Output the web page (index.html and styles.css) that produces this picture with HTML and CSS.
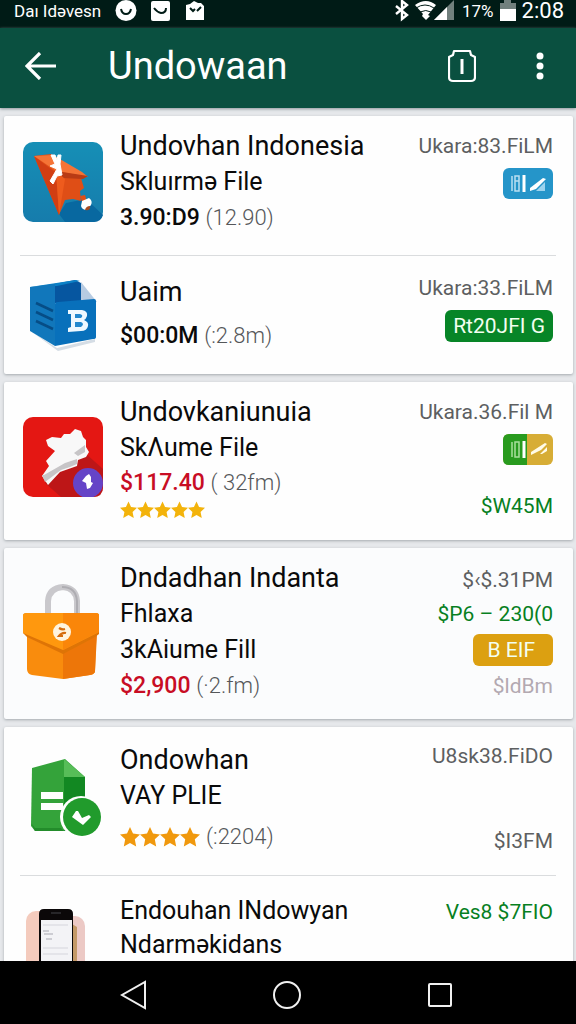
FILE: index.html
```html
<!DOCTYPE html>
<html lang="id">
<head>
<meta charset="utf-8">
<meta name="viewport" content="width=device-width, initial-scale=1">
<title>Undowaan</title>
<link rel="stylesheet" href="styles.css">
</head>
<body>
<svg class="defs" width="0" height="0" aria-hidden="true">
  <symbol id="star" viewBox="0 0 20 20"><path d="M10 0l3 6.600 7 .8-5.200 4.900L16.200 19.500 10 16l-6.200 3.500 1.400-7.200L0 7.400l7-.8z"/></symbol>
</svg>

<div class="status">
  <span class="carrier">Daı Idəvesn</span>
  <svg class="notices" width="89" height="22" viewBox="0 0 89 22">
    <g fill="#fff"><circle cx="11" cy="10.500" r="10.500"/><rect x="36" y="1" width="19" height="20" rx="2"/><path d="M71 5l4-1 4-3 4 2 3 0 3 3v14H71z"/></g>
    <g fill="none" stroke="#001b16" stroke-width="2"><path d="M6 9q1 5 5 5t5-5"/><path d="M39 8q3 4 7 5 5 0 5-5"/><path d="M75 8l3 3 2-2M82 11l4-4"/></g>
  </svg>
  <div class="system">
    <svg width="62" height="22" viewBox="0 0 62 22">
      <path d="M2 6l11 9-5 4V1l5 4L2 14" fill="none" stroke="#fff" stroke-width="2.400"/>
      <path d="M21 5q11-8 21 0l-8 10 2 1-4 4-4-4 1-2z" fill="#fff"/>
      <path d="M22 8q9-6 18 0M26 12q6-3 11 0" fill="none" stroke="#001b16" stroke-width="1"/>
      <path d="M40 20L60 0v20z" fill="#71807d"/><path d="M40 20L53 7v13z" fill="#fff"/>
    </svg>
    <span class="percent">17%</span>
    <svg width="16" height="22" viewBox="0 0 16 22"><path d="M0 3h4V0h7v3h5v6H0z" fill="#71807d"/><path d="M0 9h16v12H0z" fill="#fff"/></svg>
    <span class="clock">2:08</span>
  </div>
</div>

<header class="bar">
  <button class="bar-button" aria-label="Back">
    <svg width="32" height="28" viewBox="0 0 32 28" fill="none" stroke="#fff" stroke-width="3.200"><path d="M31 14H3M15 1L2 14l13 13"/></svg>
  </button>
  <h1>Undowaan</h1>
  <button class="bar-button" aria-label="Clipboard">
    <svg width="28" height="34" viewBox="0 0 28 34" fill="none" stroke="#fff" stroke-width="2.200"><path d="M6 2h16l1 4 4 2v20q0 4-4 4H5q-4 0-4-4V8l4-2z" stroke-linejoin="round"/><path d="M14 10v15" stroke-width="3"/></svg>
  </button>
  <button class="bar-button" aria-label="More options">
    <svg width="8" height="28" viewBox="0 0 8 28" fill="#fff"><circle cx="4" cy="4" r="3.500"/><circle cx="4" cy="14" r="3.500"/><circle cx="4" cy="24" r="3.500"/></svg>
  </button>
</header>

<main class="list">
  <section class="card">
    <article class="row">
      <svg class="icon" viewBox="0 0 80 80">
        <defs><linearGradient id="sky" x2="0" y2="1"><stop stop-color="#168fb6"/><stop offset="1" stop-color="#167cac"/></linearGradient></defs>
        <rect width="80" height="80" rx="10" fill="url(#sky)"/>
        <path d="M36 72l7-11 20-4 17 16q-2 7-9 7H42z" fill="#0868a0"/>
        <path d="M11 14l25 59 6-15 8-1 8 2-1-10 4-3-4-13L28 12z" fill="#df4e16"/>
        <path d="M11 14l22 17 3 42z" fill="#d13e13"/><path d="M11 14l22 15 32 6-6-5-29-17z" fill="#f57436"/><path d="M33 29l32 5-5 3-20-1z" fill="#b93b15"/><path d="M33 29l9 8-6 36z" fill="#ee5b1d"/>
        <path d="M27 39l7-12-7-3 5-2-4-9h4l2 5 1-5h3l-1 9 2 11-5 1-4 8z" fill="#fff" stroke="#fff" stroke-width="1"/>
        <path d="M57 54l5-1 2 7-4 2z" fill="#df4e16"/><path d="M59 59l7-3q4 3 2 7l-4 5q-5 0-6-4z" fill="#fff"/><path d="M62 68q1-4 5-4 1 5-5 4z" fill="#a74b21"/>
      </svg>
      <div class="info">
        <h2>Undovhan Indonesia<span class="subtitle">Skluırmə File</span></h2>
        <p class="price">3.90:D9 <span class="count">(12.90)</span></p>
      </div>
      <div class="side">
        <p>Ukara:83.FiLM</p>
        <svg class="chip" viewBox="0 0 50 31"><rect width="50" height="31" rx="6" fill="#2595c9"/><path d="M9 8v15M12 8h4v15h-4zM12 13h4" fill="none" stroke="#b9e0f2" stroke-width="1.500"/><path d="M21 7v17" stroke="#fff" stroke-width="3"/><path d="M27 20l13-10 3 1-10 10-6 2z" fill="#fff"/><path d="M33 23l9-9v9z" fill="#9bd3ee"/></svg>
      </div>
    </article>
    <article class="row row-loose">
      <svg class="icon" viewBox="0 0 80 80">
        <path d="M9 58l25 16 38-9v3l-37 9z" fill="#d5dde5"/>
        <path d="M58 8l16 20-18 2z" fill="#b7cbe2"/>
        <path d="M31 10l21-4 6 3v20H31z" fill="#0656a0"/>
        <path d="M7 13l46-7 4 1-23 5z" fill="#0b80c6"/>
        <path d="M7 13l25-3v62L7 57z" fill="#1177bb"/>
        <path d="M32 30q0-2 3-2l36-3q2 0 2 2v36q0 2-3 2l-38 7z" fill="#0870bb"/>
        <path d="M13 29l17 8M13 38l17 8M13 47l17 8" stroke="#064d86" stroke-width="2.500"/>
        <path d="M45 36h14q6 1 5 6-1 3-3 4 5 2 4 6-1 5-7 5l-13 1v-4l3-1V40h-3v-4z" fill="#eef8ff"/><path d="M52 40h5q4 1 1 4h-6zM52 48h6q4 2 0 5h-6z" fill="#2388ce"/>
      </svg>
      <div class="info">
        <h2>Uaim</h2>
        <p class="price">$00:0M <span class="count">(:2.8m)</span></p>
      </div>
      <div class="side">
        <p>Ukara:33.FiLM</p>
        <span class="badge badge-green">Rt20JFI G</span>
      </div>
    </article>
  </section>

  <section class="card">
    <article class="row row-rated">
      <svg class="icon" viewBox="0 0 80 80">
        <rect width="80" height="80" rx="10" fill="#e41713"/>
        <path d="M62 36l18 16v18q0 10-10 10H38L22 66z" fill="#bd1617"/>
        <path d="M19 59l7-10-3-5 9-10-7-5-2-6 6-3 9 1 3-4 6 0 5-5 6 2 2 6 3 3v7l3 5-3 5-8 3-1 6-17 6-12 13z" fill="#f8f8f8"/>
        <path d="M62 28v7l-7 4-4-3zM54 42v5l-7 3-9 3-16 12-3-7 2 0 21-12z" fill="#c7c5c7"/>
        <circle cx="65" cy="66" r="15" fill="#6544c7"/><path d="M63 59l3-2 2 3v5l2 1-3 5-3 1-1-6-4-2z" fill="#fff"/>
      </svg>
      <div class="info">
        <h2>Undovkaniunuia<span class="subtitle">SkΛume File</span></h2>
        <p class="price price-red">$117.40 <span class="count">( 32fm)</span></p>
        <div class="stars stars-small" role="img" aria-label="5 stars"><svg><use href="#star"/></svg><svg><use href="#star"/></svg><svg><use href="#star"/></svg><svg><use href="#star"/></svg><svg><use href="#star"/></svg></div>
      </div>
      <div class="side">
        <p>Ukara.36.Fil M</p>
        <svg class="chip" viewBox="0 0 50 31"><rect width="50" height="31" rx="6" fill="#d7ad36"/><path d="M24 0H6Q0 0 0 6v19q0 6 6 6h18z" fill="#299b1f"/><path d="M9 8v15M12 8h4v15h-4z" fill="none" stroke="#a9df9d" stroke-width="1.500"/><path d="M21 7v17" stroke="#fff" stroke-width="3"/><path d="M28 18l14-9 2 1-6 6-10 5zM37 20l7-7v4l-5 3z" fill="#fffbe9"/></svg>
        <p class="green last">$W45M</p>
      </div>
    </article>
  </section>

  <section class="card card-tint">
    <article class="row row-tall">
      <svg class="icon icon-tall" viewBox="0 0 80 96">
        <path d="M26 30V17q1-13 15-14 13 1 14 14v13" transform="translate(-1 0)" fill="none" stroke="#c9c8cc" stroke-width="6"/><path d="M39 3q14 0 15 14v13" fill="none" stroke="#aeadb2" stroke-width="2"/>
        <path d="M4 36h70l-2 51q0 3-5 4l-27 4-31-4q-5-1-5-6z" fill="#f98c0d"/><path d="M40 60l34-10-2 37q0 3-5 4l-27 4z" fill="#ed7609"/>
        <path d="M0 32q0-3 4-3h68q4 0 4 3v18l-4 3-32 17L4 53l-4-4z" fill="#de7406"/><path d="M0 31q0-2 4-2h68q4 0 4 2v17L40 66 0 49z" fill="#ff980e"/><path d="M40 29h32q4 0 4 2v17L40 66z" fill="#fa8609"/>
        <circle cx="39" cy="48" r="9" fill="#fff4df"/><path d="M36 44q3 2 6 1M43 49q-4-1-7 3l4 0" fill="none" stroke="#d56c0e" stroke-width="2.200"/>
      </svg>
      <div class="info">
        <h2>Dndadhan Indanta<span class="subtitle">Fhlaxa</span><span class="subtitle">3kAiume Fill</span></h2>
        <p class="price price-red">$2,900 <span class="count">(·2.fm)</span></p>
      </div>
      <div class="side">
        <p>$‹$.31PM</p>
        <p class="green">$P6 – 230(0</p>
        <span class="badge badge-gold">B EIF</span>
        <p class="faint">$ldBm</p>
      </div>
    </article>
  </section>

  <section class="card">
    <article class="row row-file">
      <svg class="icon" viewBox="0 0 80 80">
        <path d="M9 9L42 0l20 18v54H12l-4-5z" fill="#34a33a"/><path d="M41 0l21 18H41z" fill="#57bd58"/><path d="M41 18h21v54H41z" fill="#128822"/><path d="M8 64l4 8h29l-3-3H12z" fill="#238c2b"/>
        <path d="M18 33h22v7H18zM18 44h22v7H18z" fill="#fff"/><circle cx="58" cy="58" r="21" fill="#fff"/><circle cx="59" cy="58" r="19" fill="#219b2c"/>
        <path d="M49 58l4-6 2 0 4 7 7-3 2 2-8 8z" fill="#fff"/>
      </svg>
      <div class="info">
        <h2>Ondowhan<span class="subtitle">VAY PLIE</span></h2>
        <div class="rating"><div class="stars" role="img" aria-label="4 stars"><svg><use href="#star"/></svg><svg><use href="#star"/></svg><svg><use href="#star"/></svg><svg><use href="#star"/></svg></div><span class="count">(:2204)</span></div>
      </div>
      <div class="side">
        <p>U8sk38.FiDO</p>
        <p class="last">$I3FM</p>
      </div>
    </article>
    <article class="row row-end">
      <svg class="icon" viewBox="0 0 80 80">
        <rect x="3" y="17" width="28" height="63" rx="10" fill="#f4cbbd"/><rect x="36" y="22" width="26" height="58" rx="10" fill="#ecc9c5"/><path d="M49 30l5 3v47h-5z" fill="#c49a68"/>
        <path d="M16 80V20q0-5 5-5h24q5 0 5 5v60z" fill="#0b0809"/><path d="M18 26h31v54H18z" fill="#f3f3f6"/>
        <path d="M20 31h25M20 54h25M20 60h25" stroke="#d5d5dc"/><path d="M20 37h6M21 40h9M23 45h6" stroke="#a7a7b0"/><path d="M28 19h10" stroke="#44454a"/>
      </svg>
      <div class="info">
        <h2>Endouhan INdowyan<span class="subtitle">Ndarməkidans</span></h2>
      </div>
      <div class="side">
        <p class="green">Ves8 $7FIO</p>
      </div>
    </article>
  </section>
</main>

<nav class="system-nav">
  <button aria-label="Back"><svg width="28" height="30" viewBox="0 0 28 30"><path d="M25 2v26L2 15z"/></svg></button>
  <button aria-label="Home"><svg width="30" height="30" viewBox="0 0 30 30"><circle cx="15" cy="15" r="13"/></svg></button>
  <button aria-label="Recent apps"><svg width="26" height="26" viewBox="0 0 26 26"><rect x="2" y="2" width="22" height="22" rx="1"/></svg></button>
</nav>
</body>
</html>
```
FILE: styles.css
```css
* {
  box-sizing: border-box;
}

body {
  display: flex;
  flex-direction: column;
  height: 100vh;
  margin: 0;
  overflow: hidden;
  background: #e6e8eb;
  color: #0a0a0a;
  font-family: Roboto, "Noto Sans", sans-serif;
}

h1, h2, p {
  margin: 0;
  font-weight: 400;
  white-space: nowrap;
}

svg {
  display: block;
  flex: none;
}

button {
  display: flex;
  align-items: center;
  justify-content: center;
  padding: 0;
  border: 0;
  background: none;
}

.defs {
  position: absolute;
}

/* Status bar */
.status {
  display: flex;
  flex: none;
  align-items: flex-start;
  height: 28px;
  padding: 0 12px 0 14px;
  background: #001b16;
  color: #fff;
  font-size: 17px;
  line-height: 22px;
}

.notices {
  margin-left: 14px;
}

.system {
  display: flex;
  gap: 6px;
  margin-left: auto;
}

.clock {
  font-size: 22px;
}

/* App bar */
.bar {
  display: flex;
  flex: none;
  align-items: center;
  height: 80px;
  padding: 0 12px 4px 17px;
  background: #0a5040;
  color: #fff;
  box-shadow: 0 1px 3px #8b9499;
}

.bar h1 {
  flex: 1;
  margin-left: 43px;
  font-size: 38px;
  line-height: 48px;
}

.bar-button {
  width: 48px;
  height: 48px;
}

.bar-button + .bar-button {
  margin-left: 30px;
}

/* Cards */
.list {
  display: flex;
  flex: 1;
  flex-direction: column;
  gap: 8px;
  min-height: 0;
  padding: 8px 3px 0 4px;
  overflow: hidden;
}

.card {
  flex: none;
  padding: 0 17px 0 16px;
  border-radius: 2px;
  background: #fefefe;
  box-shadow: 0 1px 3px #a4a9ae;
}

.card-tint {
  background: #fbfcfd;
}

.row {
  display: grid;
  grid-template-columns: 80px 1fr auto;
  column-gap: 17px;
  padding: 12px 3px 19px;
}

.row + .row {
  border-top: 1px solid #dadcde;
}

.row-loose {
  padding-top: 18px;
  padding-bottom: 20px;
}

.row-rated {
  padding-bottom: 20px;
}

.row-tall {
  padding-bottom: 15px;
}

.row-file {
  padding-top: 15px;
  padding-bottom: 20px;
}

.row-end {
  padding-top: 18px;
}

.icon {
  align-self: center;
  width: 80px;
  height: 80px;
}

.icon-tall {
  height: 96px;
}

.info h2 {
  font-size: 27px;
  line-height: 36px;
}

.subtitle {
  display: block;
  font-size: 25px;
}

.row-end h2 {
  font-size: 25px;
  line-height: 34px;
}

.price {
  font-size: 23px;
  font-weight: 500;
  line-height: 36px;
}

.row-loose .price {
  margin-top: 8px;
}

.row-rated .price {
  line-height: 34px;
}

.price-red {
  color: #c80d24;
}

.count {
  color: #55575a;
  font-size: 22px;
  font-weight: 300;
}

.stars {
  display: flex;
}

.stars svg {
  width: 20px;
  height: 20px;
  fill: #f0980d;
}

.stars-small svg {
  width: 17px;
  height: 20px;
  fill: #f3b30b;
}

.rating {
  display: flex;
  gap: 6px;
  align-items: center;
  margin-top: 5px;
  line-height: 36px;
}

/* Right-hand column */
.side {
  display: flex;
  flex-direction: column;
  gap: 8px;
  align-items: flex-end;
  padding-top: 4px;
  color: #5d5f61;
  font-size: 21px;
  line-height: 28px;
}

.row-loose .side,
.row-file .side {
  padding-top: 0;
}

.row-tall .side {
  gap: 6px;
  padding-top: 6px;
}

.green {
  color: #07801f;
}

.faint {
  color: #b3a9b1;
}

.last {
  margin-top: auto;
}

.chip {
  width: 50px;
  height: 31px;
}

.badge {
  padding: 0 8px;
  border-radius: 6px;
  color: #f3fff0;
  line-height: 32px;
  white-space: pre;
}

.badge-green {
  background: #078527;
}

.badge-gold {
  padding: 0 18px 0 14px;
  background: #dca011;
}

/* System navigation */
.system-nav {
  display: grid;
  flex: none;
  grid-template-columns: repeat(3, 1fr);
  height: 63px;
  padding: 5px 60px 0 57px;
  background: #000;
}

.system-nav svg {
  fill: none;
  stroke: #f0f0f0;
  stroke-width: 2;
}
```
